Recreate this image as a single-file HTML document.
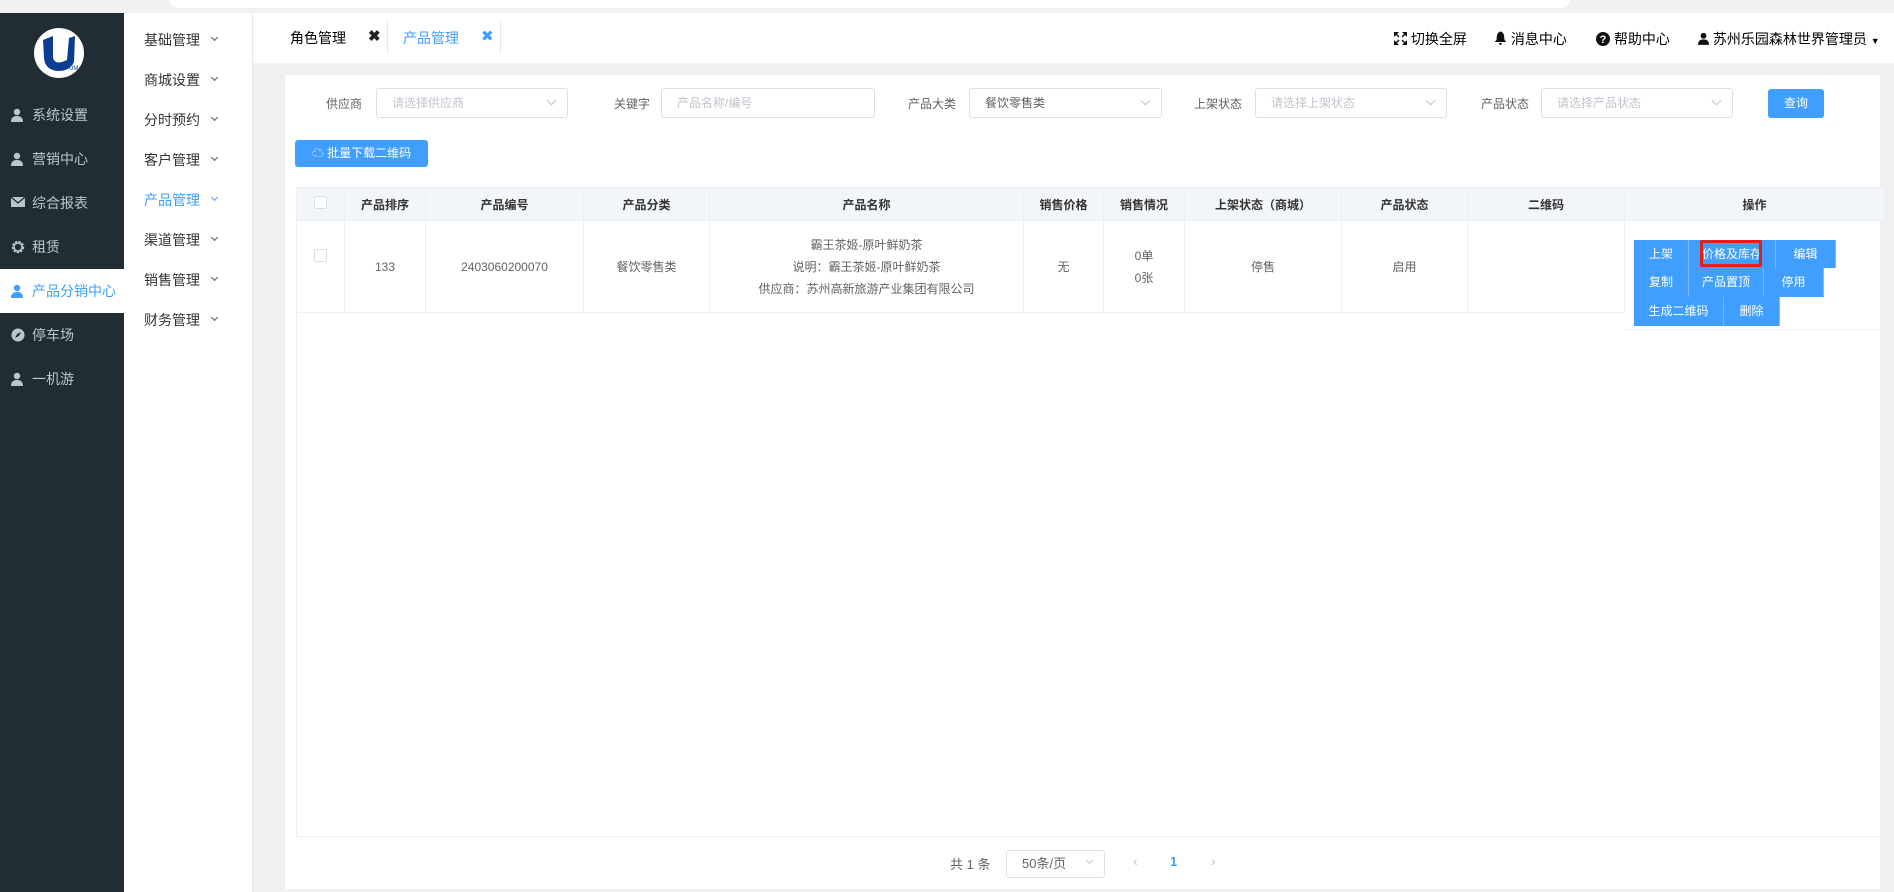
<!DOCTYPE html>
<html><head><meta charset="utf-8"><style>
*{box-sizing:border-box;margin:0;padding:0}
body{width:1894px;height:892px;overflow:hidden;background:#f0f0f0;font-family:"Liberation Sans","Noto Sans CJK SC",sans-serif;font-size:14px;color:#333;position:relative}
.abs{position:absolute}
.topstrip{left:0;top:0;width:1894px;height:13px;background:#f1f1f1}
.topstrip .pill{position:absolute;left:170px;top:0;width:1400px;height:8px;background:#fff;border-radius:0 0 10px 10px}
.side{left:0;top:13px;width:124px;height:879px;background:#222d33}
.side .it{position:absolute;left:0;width:124px;height:44px;line-height:44px;color:#b8c7ce;font-size:14px;padding-left:32px}
.side .it svg{position:absolute;left:11px;top:15px}
.side .act{background:#fff;color:#409eff}
.menu2{left:124px;top:13px;width:129px;height:879px;background:#fff;border-right:1px solid #e6e6e6}
.menu2 .m{position:absolute;left:20px;font-size:14px;color:#333}
.menu2 .m span{position:absolute;left:68px;top:5px;width:5px;height:5px;border-right:1px solid #555;border-bottom:1px solid #555;transform:rotate(45deg)}
.tabbar{left:253px;top:13px;width:1641px;height:50px;background:#fff}
.card{left:285px;top:75px;width:1595px;height:814px;background:#fff}
.lbl{font-size:12px;color:#606266}
.sel{border:1px solid #dcdfe6;border-radius:3px;height:30px;background:#fff;font-size:12px;color:#c0c4cc;line-height:28px;padding-left:15px}
.sel i{position:absolute;right:12px;top:8px;width:7px;height:7px;border-right:1px solid #c0c4cc;border-bottom:1px solid #c0c4cc;transform:rotate(45deg)}
.btn{background:#409eff;color:#fff;border-radius:3px;font-size:12px;text-align:center}
table{border-collapse:collapse;position:absolute;left:296px;top:187px;font-size:12px;color:#606266}
th{background:#f3f6f9;height:33px;font-weight:bold;color:#333;border:1px solid #ebeef5;font-size:12px}
td{height:92px;text-align:center;border:1px solid #ebeef5;line-height:22px}
.cb{display:inline-block;width:13px;height:13px;border:1px solid #dcdfe6;border-radius:2px;background:#fff}
.ob{position:absolute;background:#409eff;color:#fff;font-size:12px;text-align:center;border-right:1px solid #7ab8f5}
</style></head><body>
<div class="abs topstrip"><div class="pill"></div></div>
<div class="abs side">
 <svg class="abs" style="left:34px;top:15px" width="50" height="50" viewBox="0 0 50 50"><circle cx="25" cy="25" r="25" fill="#fff"/><path d="M9 12 L19 8 L19 30 Q21 36 28 34 L33 32 L35 10 L41 8 L40 34 Q36 43 24 43 Q11 42 10 30 Z" fill="#0b3d91"/><text x="35" y="42" font-size="6" fill="#0b3d91" font-family="Liberation Sans">UM</text></svg>
 <div class="it" style="top:80px"><svg width="12" height="14" viewBox="0 0 12 14"><circle cx="6" cy="4" r="3.2" fill="#b8c7ce"/><path d="M0 14 Q0 8 6 8 Q12 8 12 14Z" fill="#b8c7ce"/></svg>系统设置</div>
 <div class="it" style="top:124px"><svg width="12" height="14" viewBox="0 0 12 14"><circle cx="6" cy="4" r="3.2" fill="#b8c7ce"/><path d="M0 14 Q0 8 6 8 Q12 8 12 14Z" fill="#b8c7ce"/></svg>营销中心</div>
 <div class="it" style="top:168px"><svg width="14" height="12" viewBox="0 0 14 12"><rect x="0" y="1" width="14" height="10" fill="#b8c7ce"/><path d="M0 1 L7 7 L14 1" stroke="#222d33" stroke-width="1.3" fill="none"/></svg>综合报表</div>
 <div class="it" style="top:212px"><svg width="14" height="14" viewBox="0 0 14 14"><circle cx="7" cy="7" r="5" stroke="#b8c7ce" stroke-width="2.4" fill="none" stroke-dasharray="2.2 1.2"/><circle cx="7" cy="7" r="4" stroke="#b8c7ce" stroke-width="1.5" fill="none"/></svg>租赁</div>
 <div class="it act" style="top:256px"><svg width="12" height="14" viewBox="0 0 12 14"><circle cx="6" cy="4" r="3.2" fill="#409eff"/><path d="M0 14 Q0 8 6 8 Q12 8 12 14Z" fill="#409eff"/></svg>产品分销中心</div>
 <div class="it" style="top:300px"><svg width="14" height="14" viewBox="0 0 14 14"><circle cx="7" cy="7" r="6.5" fill="#b8c7ce"/><path d="M4 10 L6 6 L10 4 L8 8Z" fill="#222d33"/></svg>停车场</div>
 <div class="it" style="top:344px"><svg width="12" height="14" viewBox="0 0 12 14"><circle cx="6" cy="4" r="3.2" fill="#b8c7ce"/><path d="M0 14 Q0 8 6 8 Q12 8 12 14Z" fill="#b8c7ce"/></svg>一机游</div>
</div>
<div class="abs menu2">
 <div class="m" style="top:17px">基础管理<span></span></div>
 <div class="m" style="top:57px">商城设置<span></span></div>
 <div class="m" style="top:97px">分时预约<span></span></div>
 <div class="m" style="top:137px">客户管理<span></span></div>
 <div class="m" style="top:177px;color:#409eff">产品管理<span style="border-color:#409eff"></span></div>
 <div class="m" style="top:217px">渠道管理<span></span></div>
 <div class="m" style="top:257px">销售管理<span></span></div>
 <div class="m" style="top:297px">财务管理<span></span></div>
</div>
<div class="abs tabbar">
 <div class="abs" style="left:37px;top:15px;color:#000">角色管理</div>
 <div class="abs" style="left:115px;top:14px;font-weight:bold;color:#222;font-size:15px">✖</div>
 <div class="abs" style="left:134px;top:7px;width:1px;height:34px;background:#e6e6e6"></div>
 <div class="abs" style="left:150px;top:15px;color:#409eff">产品管理</div>
 <div class="abs" style="left:228px;top:14px;color:#409eff;font-size:15px">✖</div>
 <div class="abs" style="left:247px;top:7px;width:1px;height:34px;background:#e6e6e6"></div>
 <div class="abs" style="left:1141px;top:16px;font-size:14px;color:#000"><svg width="13" height="13" viewBox="0 0 13 13" style="vertical-align:-1px"><path d="M0 0h5l-2 2 2.5 2.5-1 1L2 3 0 5zM13 0v5l-2-2-2.5 2.5-1-1L10 2 8 0zM0 13V8l2 2 2.5-2.5 1 1L3 11l2 2zM13 13H8l2-2-2.5-2.5 1-1L11 10l2-2z" fill="#111"/></svg> 切换全屏</div>
 <div class="abs" style="left:1241px;top:16px;font-size:14px;color:#000"><svg width="13" height="14" viewBox="0 0 13 14" style="vertical-align:-1px"><path d="M6.5 0.5Q9 1 10 4L10.5 9 12.5 11H0.5L2.5 9 3 4Q4 1 6.5 0.5Z M5 12h3Q7.5 14 6.5 14 5.5 14 5 12Z" fill="#111"/></svg> 消息中心</div>
 <div class="abs" style="left:1343px;top:16px;font-size:14px;color:#000"><svg width="14" height="14" viewBox="0 0 14 14" style="vertical-align:-2px"><circle cx="7" cy="7" r="7" fill="#111"/><text x="7" y="11" text-anchor="middle" font-size="11" font-weight="bold" fill="#fff" font-family="Liberation Sans">?</text></svg> 帮助中心</div>
 <div class="abs" style="left:1445px;top:16px;font-size:14px;color:#000"><svg width="11" height="13" viewBox="0 0 12 14" style="vertical-align:-1px"><circle cx="6" cy="4" r="3.2" fill="#111"/><path d="M0 14 Q0 8 6 8 Q12 8 12 14Z" fill="#111"/></svg> 苏州乐园森林世界管理员 <span style="font-size:9px">▼</span></div>
</div>
<div class="abs card"></div>
<div class="abs lbl" style="left:326px;top:95px">供应商</div>
<div class="abs sel" style="left:376px;top:88px;width:192px">请选择供应商<i></i></div>
<div class="abs lbl" style="left:614px;top:95px">关键字</div>
<div class="abs sel" style="left:661px;top:88px;width:214px">产品名称/编号</div>
<div class="abs lbl" style="left:908px;top:95px">产品大类</div>
<div class="abs sel" style="left:969px;top:88px;width:193px;color:#606266">餐饮零售类<i></i></div>
<div class="abs lbl" style="left:1194px;top:95px">上架状态</div>
<div class="abs sel" style="left:1255px;top:88px;width:192px">请选择上架状态<i></i></div>
<div class="abs lbl" style="left:1481px;top:95px">产品状态</div>
<div class="abs sel" style="left:1541px;top:88px;width:192px">请选择产品状态<i></i></div>
<div class="abs btn" style="left:1768px;top:89px;width:56px;height:29px;line-height:29px">查询</div>
<div class="abs btn" style="left:295px;top:140px;width:133px;height:27px;line-height:27px">☁ 批量下载二维码</div>
<div class="abs" style="left:296px;top:187px;width:1588px;height:650px;border:1px solid #ebeef5"></div>
<table>
<tr><th style="width:48px"><span class="cb"></span></th><th style="width:81px">产品排序</th><th style="width:158px">产品编号</th><th style="width:126px">产品分类</th><th style="width:314px">产品名称</th><th style="width:80px">销售价格</th><th style="width:81px">销售情况</th><th style="width:157px">上架状态（商城）</th><th style="width:126px">产品状态</th><th style="width:157px">二维码</th><th style="width:260px">操作</th></tr>
<tr><td style="vertical-align:top;padding-top:26px"><span class="cb"></span></td><td>133</td><td>2403060200070</td><td>餐饮零售类</td><td>霸王茶姬-原叶鲜奶茶<br>说明：霸王茶姬-原叶鲜奶茶<br>供应商：苏州高新旅游产业集团有限公司</td><td>无</td><td>0单<br>0张</td><td>停售</td><td>启用</td><td></td><td style="border-bottom:none"></td></tr>
</table>
<div class="abs" style="left:1624px;top:329px;width:260px;height:1px;background:#ebeef5"></div>
<div class="ob" style="left:1634px;top:240px;width:55px;height:28px;line-height:28px">上架</div>
<div class="ob" style="left:1689px;top:240px;width:87px;height:28px;line-height:28px"><div style="position:absolute;left:11px;top:0;width:62px;height:27px;border:3px solid #e0201b;border-radius:2px"></div>价格及库存</div>
<div class="ob" style="left:1776px;top:240px;width:60px;height:28px;line-height:28px">编辑</div>
<div class="ob" style="left:1634px;top:268px;width:55px;height:29px;line-height:29px">复制</div>
<div class="ob" style="left:1689px;top:268px;width:75px;height:29px;line-height:29px">产品置顶</div>
<div class="ob" style="left:1764px;top:268px;width:60px;height:29px;line-height:29px">停用</div>
<div class="ob" style="left:1634px;top:297px;width:90px;height:29px;line-height:29px">生成二维码</div>
<div class="ob" style="left:1724px;top:297px;width:56px;height:29px;line-height:29px">删除</div>
<div class="abs" style="left:950px;top:854px;font-size:13px;color:#606266">共 1 条</div>
<div class="abs sel" style="left:1006px;top:850px;width:99px;height:28px;line-height:26px;color:#606266;font-size:13px">50条/页<i style="top:7px;width:5px;height:5px"></i></div>
<div class="abs" style="left:1133px;top:853px;color:#c0c4cc;font-size:14px">‹</div>
<div class="abs" style="left:1170px;top:854px;color:#409eff;font-weight:bold;font-size:13px">1</div>
<div class="abs" style="left:1211px;top:853px;color:#c0c4cc;font-size:14px">›</div>
</body></html>
